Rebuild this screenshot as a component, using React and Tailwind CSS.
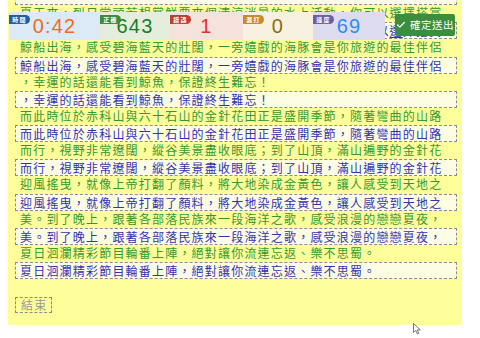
import { Check } from "lucide-react";

const rows = [
  { src: "", typed: "\u00a0" },
  { src: "夏天來，烈日當頭若想嘗鮮要來個清涼消暑的水上活動，你可以選擇搭賞", mark: 28 },
  { src: "鯨船出海，感受碧海藍天的壯闊，一旁嬉戲的海豚會是你旅遊的最佳伴侶" },
  { src: "，幸運的話還能看到鯨魚，保證終生難忘！" },
  { src: "而此時位於赤科山與六十石山的金針花田正是盛開季節，隨著彎曲的山路" },
  { src: "而行，視野非常遼闊，縱谷美景盡收眼底；到了山頂，滿山遍野的金針花" },
  { src: "迎風搖曳，就像上帝打翻了顏料，將大地染成金黃色，讓人感受到天地之" },
  { src: "美。到了晚上，跟著各部落民族來一段海洋之歌，感受浪漫的戀戀夏夜，" },
  { src: "夏日洄瀾精彩節目輪番上陣，絕對讓你流連忘返、樂不思蜀。" },
];

const stats = [
  { label: "時間", value: "0:42", box: "w-[91px] bg-[#dce9f6]", badge: "bg-[#1f5fa6]", color: "text-[#f26b1d]" },
  { label: "正確", value: "643", box: "w-[70px] bg-[#e3efdc]", badge: "bg-[#3d8b3d]", color: "text-[#1f7a2a]" },
  { label: "錯誤", value: "1", box: "w-[73px] bg-[#f6e2dc]", badge: "bg-[#b8412f]", color: "text-[#e8341c]" },
  { label: "漏打", value: "0", box: "w-[70px] bg-[#f8f0e0]", badge: "bg-[#c98a2c]", color: "text-[#8a6d0a]" },
  { label: "速度", value: "69", box: "w-[72px] bg-[#dcdcee]", badge: "bg-[#6b5fa8]", color: "text-[#2d8cf0]" },
];

function Stat({ label, value, box, badge, color }) {
  return (
    <div className={`relative flex h-[28px] items-center justify-center ${box}`}>
      <span className={`absolute left-0 top-[3px] flex h-[9px] w-[21px] items-center justify-center rounded-r-full text-[6px] font-bold leading-none text-white ${badge}`}>
        {label}
      </span>
      <span className={`font-['Liberation_Sans',sans-serif] text-[20px] leading-none ${color}`}>{value}</span>
    </div>
  );
}

function Typed({ text, mark }) {
  const chars = mark == null ? text : (
    <>
      {text.slice(0, mark)}
      <span className="underline">{text[mark]}</span>
      {text.slice(mark + 1)}
    </>
  );
  return (
    <div className="mt-[2px] h-[17px] overflow-hidden whitespace-nowrap border border-dashed border-[#8c8c8c] bg-[#fdfde4] pl-[4px] leading-[15px] text-[#3232b4]">
      {chars}
    </div>
  );
}

export default function App() {
  return (
    <div className="relative h-[338px] overflow-hidden bg-white font-['Noto_Sans_CJK_TC',sans-serif] text-[12px] tracking-[1.2px]">
      <div className="ml-[8px] mt-[-14px] w-[454px] bg-[#fefe9b] pb-[11px] pl-[7px] pr-[5px]">
        {rows.map((r, i) => (
          <div key={i}>
            {i > 0 && (
              <div className="h-[15.3px] whitespace-nowrap pl-[5px] leading-[15.3px] text-[#339933]">{r.src}</div>
            )}
            <Typed text={r.typed ?? r.src} mark={r.mark} />
          </div>
        ))}
        <div className="mt-[18px] inline-block h-[16px] border border-dashed border-[#8c8c8c] pl-[5px] pr-[4px] leading-[14px] text-[#999999]">
          結束
        </div>
      </div>

      <div className="absolute left-[9px] top-[12px] flex items-start">
        {stats.map((s) => (
          <Stat key={s.label} {...s} />
        ))}
        <button className="ml-[10px] mt-[2px] flex h-[22px] w-[60px] items-center justify-center gap-[4px] rounded-[2px] bg-[#3b8e3b] text-[10.5px] tracking-[0.5px] text-white">
          <Check size={10} strokeWidth={3} />
          確定送出
        </button>
      </div>

      <svg className="absolute left-[413px] top-[323px]" width="8" height="12" viewBox="0 0 8 12">
        <path d="M0.5 0.5 L0.5 9.5 L2.8 7.4 L4.4 11 L5.8 10.4 L4.3 6.9 L7.3 6.9 Z" fill="#fff" stroke="#555" strokeWidth="0.8" />
      </svg>
    </div>
  );
}
